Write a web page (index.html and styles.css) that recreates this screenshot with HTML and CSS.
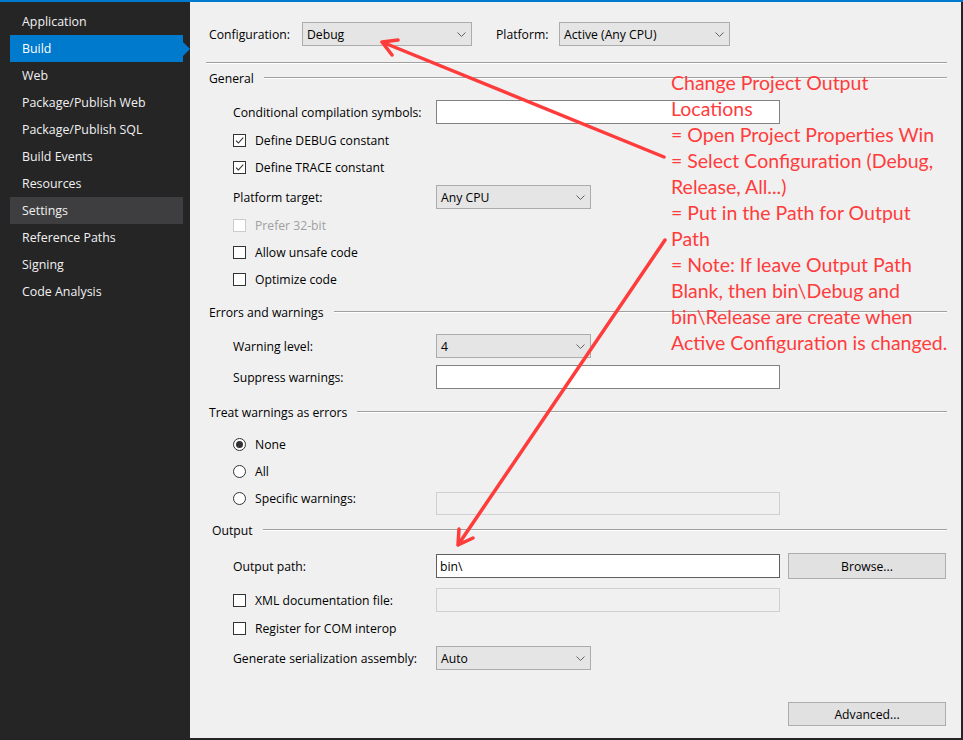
FILE: index.html
```html
<!DOCTYPE html>
<html lang="en">
<head>
<meta charset="utf-8">
<title>Build Properties</title>
<link rel="stylesheet" href="styles.css">
</head>
<body>
<div class="window">
  <div class="accent"></div>
  <div class="frame">
    <nav class="sidebar">
      <div class="nav-item">Application</div>
      <div class="nav-item active">Build</div>
      <div class="nav-item">Web</div>
      <div class="nav-item">Package/Publish Web</div>
      <div class="nav-item">Package/Publish SQL</div>
      <div class="nav-item">Build Events</div>
      <div class="nav-item">Resources</div>
      <div class="nav-item hover">Settings</div>
      <div class="nav-item">Reference Paths</div>
      <div class="nav-item">Signing</div>
      <div class="nav-item">Code Analysis</div>
    </nav>

    <main class="panel">
      <div class="toolbar">
        <span class="tb-label cfg">Configuration:</span>
        <div class="select sel-config"><span>Debug</span><svg class="chev" viewBox="0 0 9 5"><path d="M0.5 0.5 L4.5 4.5 L8.5 0.5"/></svg></div>
        <span class="tb-label plat">Platform:</span>
        <div class="select sel-platform"><span>Active (Any CPU)</span><svg class="chev" viewBox="0 0 9 5"><path d="M0.5 0.5 L4.5 4.5 L8.5 0.5"/></svg></div>
      </div>
      <div class="separator"></div>

      <div class="group-head mt-2"><span>General</span><div class="rule"></div></div>
      <div class="row mt-10"><span class="field-label">Conditional compilation symbols:</span><div class="textbox wide"></div></div>
      <div class="row mt-4"><span class="check checked"><svg viewBox="0 0 11 11"><path d="M2 5.6 L4.4 8 L9.2 2.6"/></svg></span><span>Define DEBUG constant</span></div>
      <div class="row mt-3"><span class="check checked"><svg viewBox="0 0 11 11"><path d="M2 5.6 L4.4 8 L9.2 2.6"/></svg></span><span>Define TRACE constant</span></div>
      <div class="row mt-6"><span class="field-label">Platform target:</span><div class="select narrow"><span>Any CPU</span><svg class="chev" viewBox="0 0 9 5"><path d="M0.5 0.5 L4.5 4.5 L8.5 0.5"/></svg></div></div>
      <div class="row mt-4 disabled"><span class="check"></span><span>Prefer 32-bit</span></div>
      <div class="row mt-3"><span class="check"></span><span>Allow unsafe code</span></div>
      <div class="row mt-3"><span class="check"></span><span>Optimize code</span></div>

      <div class="group-head mt-9"><span>Errors and warnings</span><div class="rule"></div></div>
      <div class="row mt-10"><span class="field-label">Warning level:</span><div class="select narrow"><span>4</span><svg class="chev" viewBox="0 0 9 5"><path d="M0.5 0.5 L4.5 4.5 L8.5 0.5"/></svg></div></div>
      <div class="row mt-7"><span class="field-label">Suppress warnings:</span><div class="textbox wide"></div></div>

      <div class="group-head mt-11"><span>Treat warnings as errors</span><div class="rule"></div></div>
      <div class="row mt-8"><span class="radio checked"></span><span>None</span></div>
      <div class="row mt-3"><span class="radio"></span><span>All</span></div>
      <div class="row row-tall mt-3"><span class="field-label choice"><span class="radio"></span><span>Specific warnings:</span></span><div class="textbox wide off low"></div></div>

      <div class="group-head head-output mt-3"><span>Output</span><div class="rule"></div></div>
      <div class="row mt-12"><span class="field-label">Output path:</span><div class="textbox wide focus"><span>bin\</span></div><button class="btn">Browse...</button></div>
      <div class="row mt-10"><span class="field-label choice"><span class="check"></span><span>XML documentation file:</span></span><div class="textbox wide off"></div></div>
      <div class="row mt-4"><span class="check"></span><span>Register for COM interop</span></div>
      <div class="row mt-6"><span class="field-label">Generate serialization assembly:</span><div class="select narrow"><span>Auto</span><svg class="chev" viewBox="0 0 9 5"><path d="M0.5 0.5 L4.5 4.5 L8.5 0.5"/></svg></div></div>

      <div class="footer mt-32"><button class="btn">Advanced...</button></div>
    </main>
  </div>

  <div class="note">Change Project Output<br>Locations<br>= Open Project Properties Win<br>= Select Configuration (Debug,<br>Release, All...)<br>= Put in the Path for Output<br>Path<br>= Note: If leave Output Path<br>Blank, then bin\Debug and<br>bin\Release are create when<br>Active Configuration is changed.</div>

  <svg class="arrows" viewBox="0 0 963 740" width="963" height="740">
    <path d="M664 157 L382 42 M382 42 L392 55 M382 42 L398 40"/>
    <path d="M665 240 L458 545 M458 545 L459 529 M458 545 L473 538"/>
  </svg>
</div>
</body>
</html>
```

FILE: styles.css
```css
* { box-sizing: border-box; }
html, body { margin: 0; padding: 0; }
body {
  width: 963px;
  height: 740px;
  overflow: hidden;
  background: #252526;
  font-family: "Open Sans", "Noto Sans", sans-serif;
  font-size: 12.2px;
  color: #000;
}
.window {
  position: relative;
  width: 963px;
  height: 740px;
  display: flex;
  flex-direction: column;
  background: #252526;
}
.accent { height: 2px; background: #007acc; flex: none; }
.frame { flex: 1; display: flex; min-height: 0; }

/* sidebar */
.sidebar { width: 190px; flex: none; padding-top: 6px; color: #f1f1f1; font-size: 12.4px; }
.nav-item {
  position: relative;
  height: 27px;
  line-height: 28px;
  margin-left: 10px;
  width: 173px;
  padding-left: 12px;
  white-space: nowrap;
}
.nav-item.active { background: #007acc; color: #fff; }
.nav-item.active::after {
  content: "";
  position: absolute;
  right: -7px;
  top: 50%;
  margin-top: -7px;
  border-left: 7px solid #007acc;
  border-top: 7px solid transparent;
  border-bottom: 7px solid transparent;
}
.nav-item.hover { background: #3e3e40; }

/* main panel */
.panel {
  flex: 1;
  background: #f0f0f0;
  margin: 0 2px 2px 0;
  padding: 20px 14px 0 19px;
  display: flex;
  flex-direction: column;
  white-space: nowrap;
}
.toolbar { display: flex; align-items: center; height: 24px; }
.tb-label.cfg { width: 93px; }
.tb-label.plat { margin-left: 24px; width: 63px; }
.sel-config { width: 170px; }
.sel-platform { width: 171px; }

.select {
  height: 24px;
  background: #e5e5e5;
  border: 1px solid #acacac;
  display: flex;
  align-items: center;
  justify-content: space-between;
  padding: 0 5px 0 4px;
}
.select.narrow { width: 155px; }
.chev { width: 9px; height: 5px; }
.chev path { fill: none; stroke: #606060; stroke-width: 1; }

.separator {
  margin-top: 16px;
  margin-left: -3px;
  height: 2px;
  border-top: 1px solid #a0a0a0;
  border-bottom: 1px solid #ffffff;
}

.group-head { display: flex; align-items: center; height: 24px; gap: 10px; }
.group-head .rule {
  flex: 1;
  height: 2px;
  border-top: 1px solid #a0a0a0;
  border-bottom: 1px solid #ffffff;
}
.head-output { margin-left: 3px; }

.row { display: flex; align-items: center; height: 24px; margin-left: 24px; }
.row-tall { height: 29px; align-items: flex-start; }
.row-tall .field-label { height: 24px; }
.field-label { width: 203px; flex: none; display: flex; align-items: center; }
.disabled { color: #a0a0a0; }

.textbox {
  height: 24px;
  background: #fff;
  border: 1px solid #828282;
  display: flex;
  align-items: center;
  padding-left: 3px;
}
.textbox.wide { width: 344px; }
.textbox.focus { border-color: #5f5f5f; }
.textbox.off { background: #f0f0f0; border-color: #d0d0d0; }
.textbox.low { margin-top: 6px; height: 23px; }

.check {
  width: 13px;
  height: 13px;
  border: 1px solid #333;
  background: #fff;
  margin-right: 9px;
  flex: none;
  display: flex;
  align-items: center;
  justify-content: center;
}
.check svg { width: 11px; height: 11px; }
.check svg path { fill: none; stroke: #333; stroke-width: 1.1; }
.disabled .check { border-color: #cccccc; }

.radio {
  width: 13px;
  height: 13px;
  border: 1px solid #333;
  border-radius: 50%;
  background: #fff;
  margin-right: 9px;
  flex: none;
  display: flex;
  align-items: center;
  justify-content: center;
}
.radio.checked::after {
  content: "";
  width: 7px;
  height: 7px;
  border-radius: 50%;
  background: #333;
}

.btn {
  font: inherit;
  color: #000;
  height: 26px;
  width: 158px;
  margin-left: 8px;
  background: #e1e1e1;
  border: 1px solid #adadad;
  padding: 0;
}
.footer { display: flex; justify-content: flex-end; padding-right: 1px; }
.footer .btn { height: 24px; }

.mt-2 { margin-top: 2px; }
.mt-3 { margin-top: 3px; }
.mt-4 { margin-top: 4px; }
.mt-6 { margin-top: 6px; }
.mt-7 { margin-top: 7px; }
.mt-8 { margin-top: 8px; }
.mt-9 { margin-top: 9px; }
.mt-10 { margin-top: 10px; }
.mt-11 { margin-top: 11px; }
.mt-12 { margin-top: 12px; }
.mt-32 { margin-top: 32px; }

/* annotation overlay */
.note {
  position: absolute;
  left: 671px;
  top: 70px;
  font-family: "Lato", sans-serif;
  font-size: 19.5px;
  line-height: 26px;
  color: #ff3c3c;
  white-space: nowrap;
}
.arrows {
  position: absolute;
  left: 0;
  top: 0;
  pointer-events: none;
}
.arrows path {
  fill: none;
  stroke: #ff3c3c;
  stroke-width: 3.5;
  stroke-linecap: round;
  stroke-linejoin: round;
}
```
